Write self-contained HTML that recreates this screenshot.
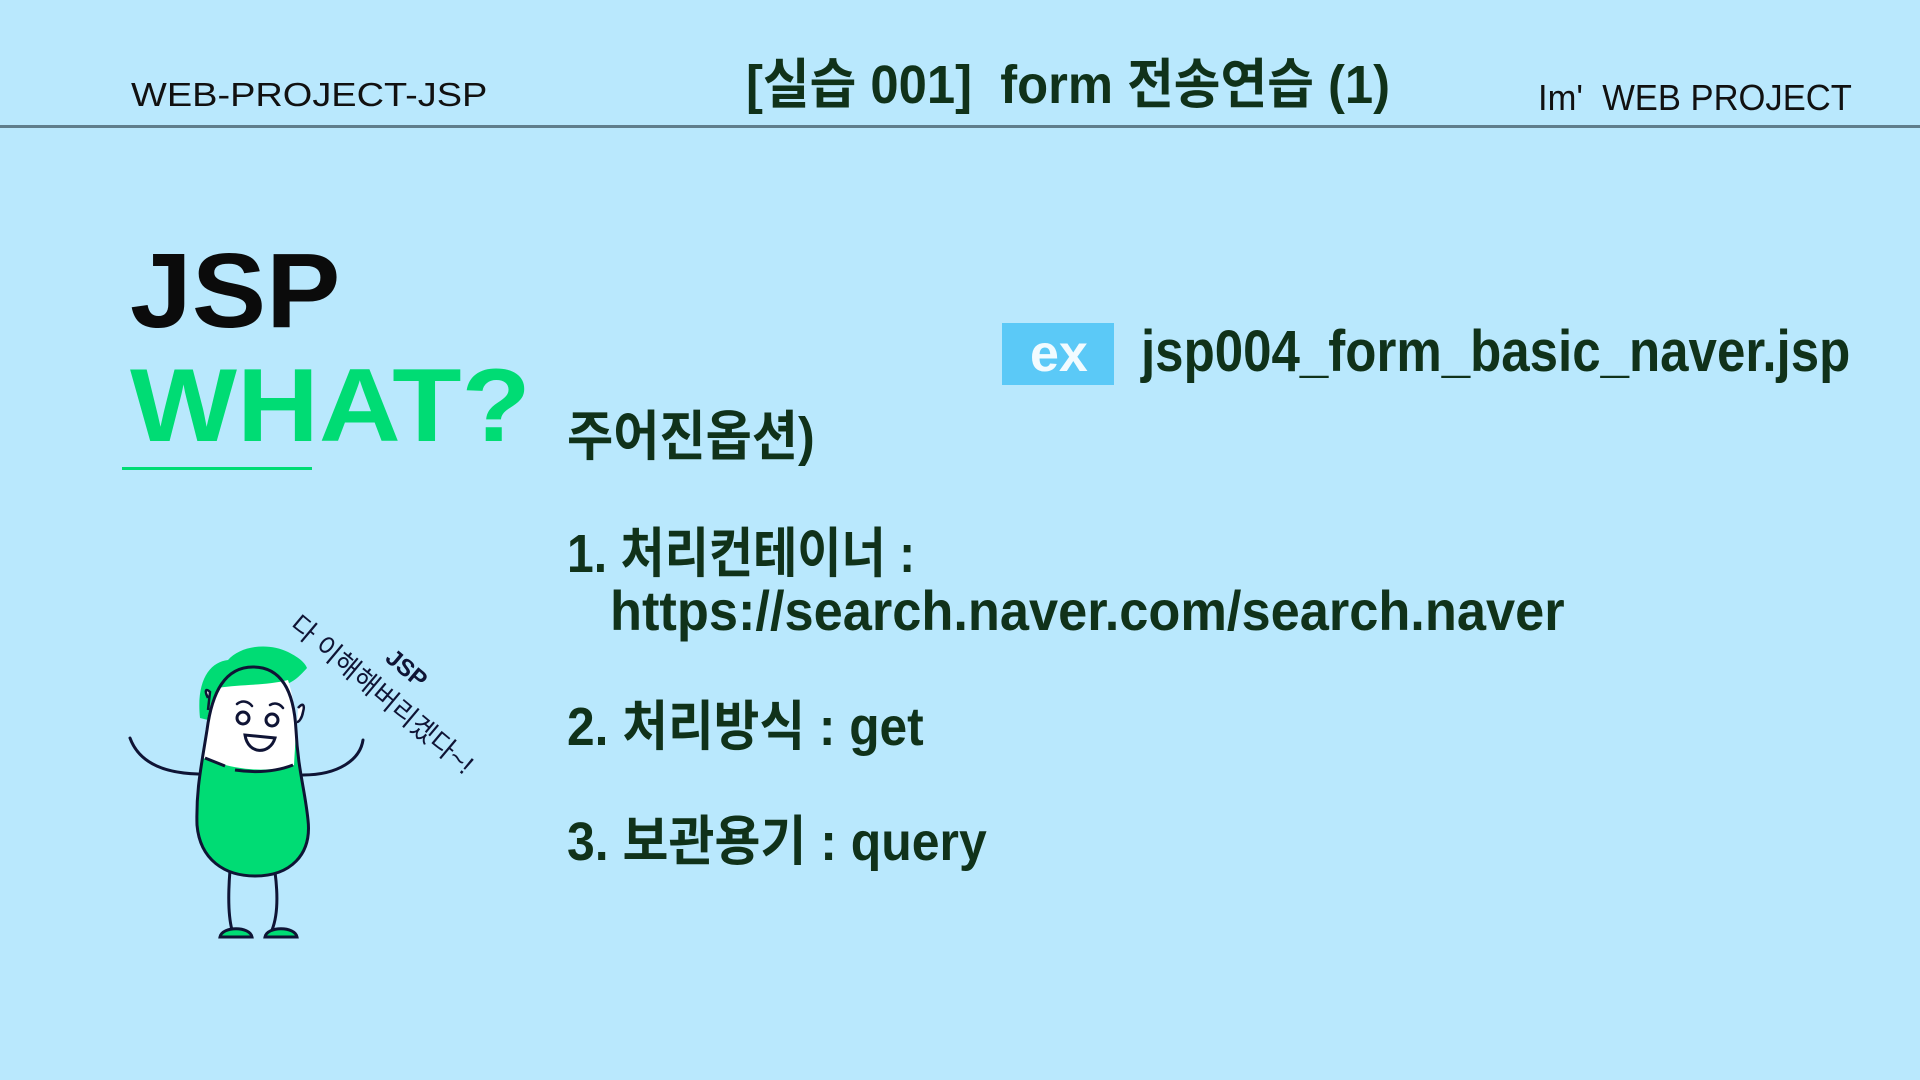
<!DOCTYPE html>
<html><head><meta charset="utf-8"><style>
html,body{margin:0;padding:0}
body{width:1920px;height:1080px;background:#b9e8fd;position:relative;overflow:hidden;font-family:"Liberation Sans","Noto Sans CJK KR",sans-serif;color:#10321a}
.a{position:absolute;white-space:nowrap;line-height:1}
.sq{display:inline-block;transform-origin:left top}
</style></head><body>
<div class="a" style="left:131px;top:78px;font-size:33px;color:#111;"><span class="sq" style="transform:scaleX(1.15)">WEB-PROJECT-JSP</span></div>
<div class="a" style="left:746px;top:58px;font-size:54px;font-weight:bold;color:#10321a;"><span class="sq" style="transform:scaleX(0.94)">[실습 001]&nbsp; form 전송연습 (1)</span></div>
<div class="a" style="left:1538px;top:80px;font-size:36px;color:#111;"><span class="sq" style="transform:scaleX(0.96)">Im'&nbsp; WEB PROJECT</span></div>
<div style="position:absolute;left:0;top:125px;width:1920px;height:3px;background:#5f7e8c"></div>

<div class="a" style="left:130px;top:238px;font-size:106px;font-weight:bold;color:#0b0b0b;"><span class="sq" style="transform:scaleX(1.05)">JSP</span></div>
<div class="a" style="left:130px;top:354px;font-size:104px;font-weight:bold;color:#00dc74;"><span class="sq" style="transform:scaleX(1.09)">WHAT?</span></div>
<div style="position:absolute;left:122px;top:467px;width:190px;height:3px;background:#00dc74"></div>

<div style="position:absolute;left:1002px;top:323px;width:112px;height:62px;background:#5bc9f7"></div>
<div class="a" style="left:1030px;top:328px;font-size:52px;font-weight:bold;color:#f2fbff;">ex</div>
<div class="a" style="left:1141px;top:323px;font-size:58px;font-weight:bold;"><span class="sq" style="transform:scaleX(0.88)">jsp004_form_basic_naver.jsp</span></div>

<div class="a" style="left:567px;top:410px;font-size:54px;font-weight:bold;"><span class="sq" style="transform:scaleX(0.93)">주어진옵션)</span></div>
<div class="a" style="left:567px;top:527px;font-size:54px;font-weight:bold;"><span class="sq" style="transform:scaleX(0.89)">1. 처리컨테이너 :</span></div>
<div class="a" style="left:610px;top:583px;font-size:56px;font-weight:bold;"><span class="sq" style="transform:scaleX(0.935)">https://search.naver.com/search.naver</span></div>
<div class="a" style="left:567px;top:700px;font-size:54px;font-weight:bold;"><span class="sq" style="transform:scaleX(0.92)">2. 처리방식 : get</span></div>
<div class="a" style="left:567px;top:815px;font-size:54px;font-weight:bold;"><span class="sq" style="transform:scaleX(0.925)">3. 보관용기 : query</span></div>

<svg style="position:absolute;left:100px;top:600px" width="420" height="350" viewBox="0 0 420 350">
 <g fill="none" stroke="#0f1435" stroke-width="3" stroke-linecap="round">
  <path d="M30,138 C38,160 60,173 98,174"/>
  <path d="M263,140 C260,160 238,175 203,175"/>
  <path d="M130,270 C128,295 128,315 132,330"/>
  <path d="M175,272 C178,295 178,315 172,330"/>
 </g>
 <path d="M120,337 C122,326 150,326 152,337 Z" fill="#00dc74" stroke="#0f1435" stroke-width="3"/>
 <path d="M165,337 C167,326 195,326 197,337 Z" fill="#00dc74" stroke="#0f1435" stroke-width="3"/>
 <path d="M100,118 C96,80 110,62 128,60 C140,46 168,42 188,52 C200,58 205,63 207,68 C198,78 190,86 175,86 C160,84 150,82 140,86 C124,92 112,102 108,120 Z" fill="#00dc74"/>
 <path d="M153,67 C125,67 112,92 107,130 C101,168 96,190 97,225 C100,260 125,276 155,276 C190,276 212,255 208,220 C205,190 198,170 196,130 C194,92 182,67 153,67 Z" fill="#00dc74"/>
 <path d="M118,88 C140,84 165,86 188,80 C193,95 196,115 196,130 L194,165 C170,172 140,172 103,158 L106,130 C108,110 112,98 118,88 Z" fill="#fff"/>
 <path d="M153,67 C125,67 112,92 107,130 C101,168 96,190 97,225 C100,260 125,276 155,276 C190,276 212,255 208,220 C205,190 198,170 196,130 C194,92 182,67 153,67 Z" fill="none" stroke="#0f1435" stroke-width="3"/>
 <path d="M105,158 C115,162 120,164 125,166 M135,170 C155,173 175,172 193,165" fill="none" stroke="#0f1435" stroke-width="3"/>
 <path d="M108,98 C104,90 106,88 110,92 L108,110" fill="#fff" stroke="#0f1435" stroke-width="2.5"/>
 <path d="M198,108 C203,102 205,105 203,112 C202,118 199,122 197,122" fill="#fff" stroke="#0f1435" stroke-width="2.5"/>
 <circle cx="143" cy="118" r="6" fill="#fff" stroke="#0f1435" stroke-width="3"/>
 <circle cx="172" cy="120" r="6" fill="#fff" stroke="#0f1435" stroke-width="3"/>
 <path d="M137,104 C142,100 148,101 152,106 M170,105 C175,102 180,104 183,108" fill="none" stroke="#0f1435" stroke-width="2.5" stroke-linecap="round"/>
 <path d="M145,135 C148,155 170,155 175,138 Z" fill="#fff" stroke="#0f1435" stroke-width="3"/>
 <text x="188" y="28" font-size="27" fill="#0f1435" transform="rotate(40 188 28)" font-family="'Liberation Sans','Noto Sans CJK KR',sans-serif">다 이해해버리겠다~!</text>
 <text x="284" y="60" font-size="24" font-weight="bold" fill="#0f1435" transform="rotate(40 284 60)" font-family="'Liberation Sans',sans-serif">JSP</text>
</svg>
</body></html>
